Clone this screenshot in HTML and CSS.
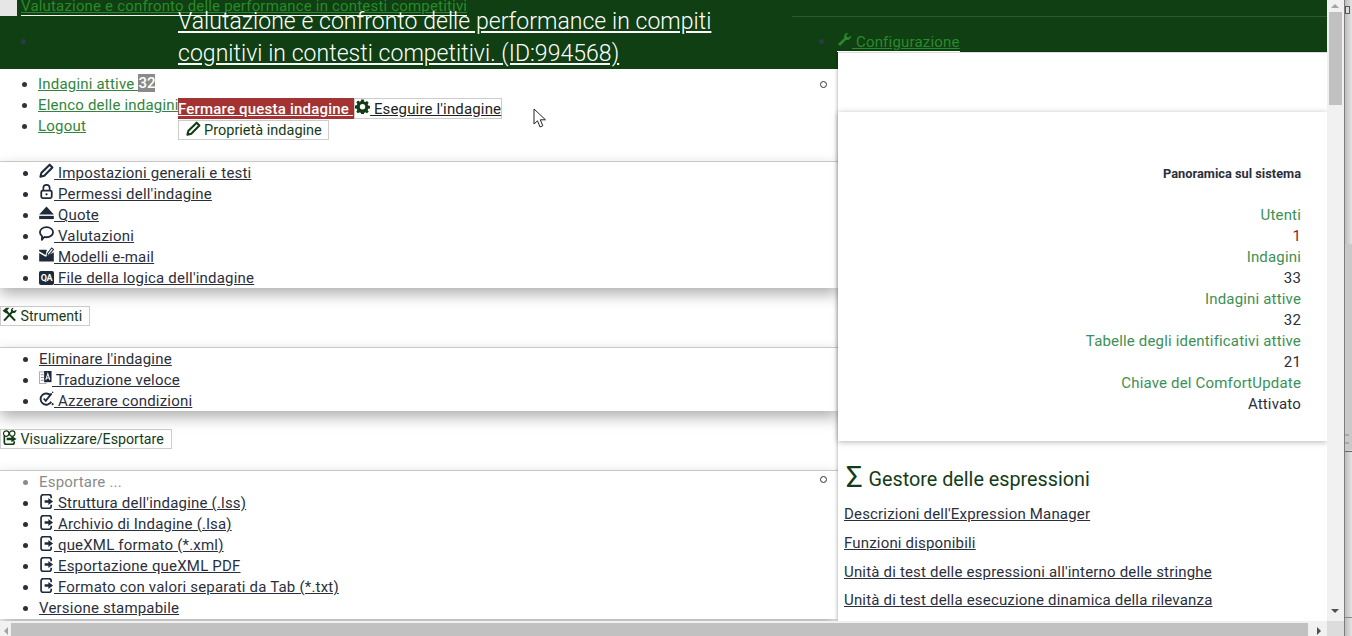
FILE: index.html
```html
<!DOCTYPE html>
<html lang="it">
<head>
<meta charset="utf-8">
<title>Valutazione e confronto</title>
<link rel="stylesheet" href="styles.css">
</head>
<body>
<svg class="sprites" width="0" height="0" aria-hidden="true">
  <defs>
    <symbol id="i-pencil" viewBox="0 0 16 16"><path d="M11.4 1.800 14.300 4.700 5.600 13.500 1.500 14.600 2.600 10.400Z" fill="none" stroke="currentColor" stroke-width="2.200" stroke-linejoin="round"/></symbol>
    <symbol id="i-lock" viewBox="0 0 16 16"><path d="M4.600 7V4.400a3.400 3.400 0 0 1 6.800 0V7" fill="none" stroke="currentColor" stroke-width="1.800"/><rect x="2.400" y="7" width="11.200" height="8" rx="1.600" fill="none" stroke="currentColor" stroke-width="1.900"/><circle cx="8" cy="11" r="1.200" fill="currentColor"/></symbol>
    <symbol id="i-eject" viewBox="0 0 16 16"><path d="M8 1.500 15.800 10H.2Z" fill="currentColor"/><rect x=".2" y="11.600" width="15.600" height="3.400" fill="currentColor"/></symbol>
    <symbol id="i-bubble" viewBox="0 0 16 16"><path d="M8 1.200c3.900 0 7 2.400 7 5.400s-3.100 5.400-7 5.400c-.8 0-1.600-.1-2.400-.3L3 14.800l.3-4C1.900 9.800 1 8.300 1 6.600 1 3.600 4.100 1.200 8 1.200Z" fill="none" stroke="currentColor" stroke-width="1.900" stroke-linejoin="round"/></symbol>
    <symbol id="i-mail" viewBox="0 0 16 16"><path d="M.2 6.500 7 10.500l3.500-2 5.300-3V15.500H.2Z" fill="currentColor"/><path d="M.2 3H8.300L7.500 7 6.800 8.400.2 4.600Z" fill="currentColor"/><path d="M9 7 13.500 1 15.500 2.700 10.800 8.200 8.800 8.800Z" fill="none" stroke="currentColor" stroke-width="1.100"/></symbol>
    <symbol id="i-export" viewBox="0 0 16 16"><path d="M13 4.500V3A2.300 2.300 0 0 0 10.700.7H4.500A2.300 2.300 0 0 0 2.200 3v10a2.300 2.300 0 0 0 2.300 2.300h6.200A2.300 2.300 0 0 0 13 13v-1.500" fill="none" stroke="currentColor" stroke-width="1.800"/><path d="M6 6.600h4V4.200L15 8l-5 3.800V9.400H6Z" fill="currentColor"/></symbol>
    <symbol id="i-translate" viewBox="0 0 14 16"><rect x=".5" y="2" width="7" height="12.500" fill="none" stroke="#aaa" stroke-width="1"/><path d="M2 5h3M2 8h3M2 11h3" stroke="#888" stroke-width="1"/><rect x="5.500" y="1" width="8" height="12" fill="currentColor"/><path d="M7.300 10.500 9.500 3.800 11.700 10.500M8 8.600h3" fill="none" stroke="#fff" stroke-width="1.100"/></symbol>
    <symbol id="i-reset" viewBox="0 0 16 16"><path d="M12.500 5A6 6 0 1 0 13 11.500" fill="none" stroke="currentColor" stroke-width="2"/><path d="M5 8 7.200 10.500 13.500 2.500" fill="none" stroke="currentColor" stroke-width="1.900"/><circle cx="14.500" cy="14" r="1.100" fill="currentColor"/><circle cx="14.500" cy="1.200" r=".8" fill="currentColor"/></symbol>
    <symbol id="i-gear" viewBox="0 0 16 16"><path fill-rule="evenodd" d="M6.700.6h2.600l.4 2 1.300.6 1.800-1.100 1.800 1.800-1.100 1.800.6 1.300 2 .4v2.600l-2 .4-.6 1.300 1.100 1.800-1.800 1.800-1.800-1.100-1.300.6-.4 2H6.700l-.4-2-1.300-.6-1.800 1.100-1.800-1.800 1.100-1.800-.6-1.300-2-.4V7l2-.4.6-1.300-1.100-1.800 1.800-1.800L5 2.800l1.300-.6ZM8 5.400a2.900 2.900 0 1 0 0 5.800 2.900 2.900 0 0 0 0-5.800Z" fill="currentColor"/></symbol>
    <symbol id="i-tools" viewBox="0 0 16 16"><path d="M2.200 14.500 11 5M14 14.500 5 5" fill="none" stroke="currentColor" stroke-width="2.200"/><path d="M.5 4 4.500.8H8L5.500 3.500 6.500 5 4.500 7Z" fill="currentColor"/><path d="M15.500 3a3 3 0 0 1-4.500 3L9.500 4.500a3 3 0 0 1 3-3.800L11 3l1.500 1.200Z" fill="currentColor"/></symbol>
    <symbol id="i-view" viewBox="0 0 16 16"><circle cx="4.500" cy="3.800" r="2.900" fill="none" stroke="currentColor" stroke-width="1.300"/><circle cx="10.900" cy="3.800" r="2.900" fill="none" stroke="currentColor" stroke-width="1.300"/><path d="M13 12v1.300a2 2 0 0 1-2 2H4.500a2 2 0 0 1-2-2V6.500" fill="none" stroke="currentColor" stroke-width="1.800"/><path d="M5 8.200h5V6l5.500 3.500L10 13v-2.200H5Z" fill="currentColor"/></symbol>
    <symbol id="i-wrench" viewBox="0 0 16 16"><path d="M15 3.800a4 4 0 0 1-5.300 4.400L3.300 15 1 12.700l6.800-6.400A4 4 0 0 1 12.200 1L9.800 3.400l.6 1.900 1.900.6Z" fill="currentColor"/></symbol>
  </defs>
</svg>

<div class="window">
  <div class="pane">
    <div class="stage">
      <header class="header">
        <a class="brand-mark" href="#" aria-label="Home"></a>
        <a class="brand" href="#">Valutazione e confronto delle performance in contesti competitivi</a>
        <div class="hdr-left">
          <span class="hdr-dot"></span>
          <a class="title" href="#">Valutazione e confronto delle performance in compiti cognitivi in contesti competitivi. (ID:994568)</a>
        </div>
        <div class="hdr-right">
          <span class="hdr-dot hdr-dot-r"></span>
          <a class="config" href="#"><svg class="ic"><use href="#i-wrench"/></svg> Configurazione</a>
        </div>
      </header>

      <div class="body">
        <main class="left">
          <section class="top">
            <ul class="list nav">
              <li><a href="#">Indagini attive <b class="badge">32</b></a></li>
              <li><a href="#">Elenco delle indagini</a></li>
              <li><a href="#">Logout</a></li>
            </ul>
            <div class="actions">
              <div class="act-row">
                <a class="btn-stop" href="#">Fermare questa indagine </a>
                <a class="btn-run" href="#"><svg class="ic"><use href="#i-gear"/></svg> Eseguire l'indagine</a>
              </div>
              <a class="btn" href="#"><svg class="ic"><use href="#i-pencil"/></svg> Proprietà indagine</a>
            </div>
            <span class="ring"></span>
          </section>

          <section class="panel panel-1">
            <ul class="list menu">
              <li><a href="#"><svg class="ic"><use href="#i-pencil"/></svg> Impostazioni generali e testi</a></li>
              <li><a href="#"><svg class="ic"><use href="#i-lock"/></svg> Permessi dell'indagine</a></li>
              <li><a href="#"><svg class="ic"><use href="#i-eject"/></svg> Quote</a></li>
              <li><a href="#"><svg class="ic"><use href="#i-bubble"/></svg> Valutazioni</a></li>
              <li><a href="#"><svg class="ic"><use href="#i-mail"/></svg> Modelli e-mail</a></li>
              <li><a href="#"><span class="qa">QA</span> File della logica dell'indagine</a></li>
            </ul>
          </section>

          <div class="tool-row"><a class="btn" href="#"><svg class="ic"><use href="#i-tools"/></svg> Strumenti</a></div>
          <section class="panel panel-2">
            <ul class="list menu">
              <li><a href="#">Eliminare l'indagine</a></li>
              <li><a href="#"><svg class="ic ic-t"><use href="#i-translate"/></svg> Traduzione veloce</a></li>
              <li><a href="#"><svg class="ic"><use href="#i-reset"/></svg> Azzerare condizioni</a></li>
            </ul>
          </section>

          <div class="tool-row"><a class="btn" href="#"><svg class="ic"><use href="#i-view"/></svg> Visualizzare/Esportare</a></div>
          <section class="panel panel-3">
            <span class="ring ring-low"></span>
            <ul class="list menu">
              <li class="muted">Esportare ...</li>
              <li><a href="#"><svg class="ic ic-x"><use href="#i-export"/></svg> Struttura dell'indagine (.lss)</a></li>
              <li><a href="#"><svg class="ic ic-x"><use href="#i-export"/></svg> Archivio di Indagine (.lsa)</a></li>
              <li><a href="#"><svg class="ic ic-x"><use href="#i-export"/></svg> queXML formato (*.xml)</a></li>
              <li><a href="#"><svg class="ic ic-x"><use href="#i-export"/></svg> Esportazione queXML PDF</a></li>
              <li><a href="#"><svg class="ic ic-x"><use href="#i-export"/></svg> Formato con valori separati da Tab (*.txt)</a></li>
              <li><a href="#">Versione stampabile</a></li>
            </ul>
          </section>
        </main>

        <aside class="right">
          <div class="spacer"></div>
          <section class="card">
            <h2 class="card-title">Panoramica sul sistema</h2>
            <dl class="stats">
              <dt>Utenti</dt><dd class="hot">1</dd>
              <dt>Indagini</dt><dd>33</dd>
              <dt>Indagini attive</dt><dd>32</dd>
              <dt>Tabelle degli identificativi attive</dt><dd>21</dd>
              <dt>Chiave del ComfortUpdate</dt><dd>Attivato</dd>
            </dl>
          </section>
          <section class="expr">
            <h3 class="expr-title"><span class="sigma">Σ</span> Gestore delle espressioni</h3>
            <a href="#">Descrizioni dell'Expression Manager</a>
            <a href="#">Funzioni disponibili</a>
            <a href="#">Unità di test delle espressioni all'interno delle stringhe</a>
            <a href="#">Unità di test della esecuzione dinamica della rilevanza</a>
          </section>
        </aside>
      </div>
    </div>

    <div class="hbar">
      <span class="arrow arrow-left"></span>
      <span class="hthumb"></span>
      <span class="arrow arrow-right"></span>
    </div>
  </div>

  <div class="vbar">
    <span class="arrow arrow-up"></span>
    <span class="vthumb"></span>
    <span class="arrow arrow-down"></span>
    <span class="corner"></span>
  </div>

  <div class="outer-strip">
    <span class="strip-box"></span>
    <span class="strip-light"></span>
    <span class="strip-mark"></span>
    <span class="strip-lower"></span>
    <span class="strip-line"></span>
  </div>
</div>

<svg class="cursor" width="14" height="21" viewBox="0 0 14 21" aria-hidden="true"><path d="M1 1V16L4.500 12.800 7 19 9.800 17.800 7.300 11.800H12.500Z" fill="#fff" stroke="#222" stroke-width="1"/></svg>
</body>
</html>
```
FILE: styles.css
```css
* { box-sizing: border-box; }
html, body { margin: 0; height: 100%; overflow: hidden; }
body { font: 15px/21px Roboto, "Liberation Sans", sans-serif; letter-spacing: .2px; color: #333; background: #fff; }
a { color: inherit; }
ul { margin: 0; }
.sprites { position: absolute; }

.window { display: flex; width: 1352px; height: 636px; }
.pane { width: 1327px; display: flex; flex-direction: column; }
.stage { height: 621px; overflow: hidden; }

/* header */
.header { position: relative; height: 69px; background: #0f3f13; display: flex; color: #2a8a2a; }
.header::after { content: ""; position: absolute; left: 792px; right: 0; top: 16px; height: 1px; background: #2b5a2f; }
.brand-mark { position: absolute; left: 0; top: 0; width: 17px; height: 16px; background: #e6e6e6; }
.brand { position: absolute; left: 21px; top: -3px; z-index: 1; font-size: 15px; line-height: 18px; letter-spacing: .18px; border-bottom: 1px solid #fff; white-space: nowrap; }
.hdr-left { width: 837px; display: flex; align-items: flex-start; padding-top: 6px; }
.hdr-dot { width: 5px; height: 5px; margin: 33px 0 0 21px; border-radius: 50%; background: #2e3a45; flex: none; }
.title { width: 560px; margin-left: 152px; font-size: 23px; line-height: 32px; font-weight: 300; letter-spacing: .04px; color: #fff; position: relative; z-index: 2; }
.hdr-right { position: relative; flex: 1; }
.hdr-dot-r { position: absolute; left: -18px; top: 6px; margin: 33px 0 0; }
.config { position: absolute; left: 0; top: 32px; height: 20px; display: inline-block; border-bottom: 1px solid #fff; z-index: 3; white-space: nowrap; letter-spacing: .2px; }
.config .ic { color: #2a8a2a; }

.ic { display: inline-block; width: 15px; height: 15px; vertical-align: 0; color: #1e2a3a; }
.ic-t { width: 13px; }
.ic-x { vertical-align: -1px; }
.qa { display: inline-block; width: 15px; height: 14px; border-radius: 2px; background: #1e2a3a; color: #fff; font-size: 9px; line-height: 14px; font-weight: 700; text-align: center; vertical-align: 2px; letter-spacing: -.5px; }

/* layout */
.body { display: flex; height: 552px; }
.left { width: 838px; flex: none; }
.right { width: 489px; flex: none; margin-top: -17px; height: 569px; background: #fff; position: relative; z-index: 2; border-top: 1px solid #ddd; box-shadow: -1px 0 3px rgba(0,0,0,.25); }

/* left top */
.top { height: 93px; display: flex; align-items: flex-start; border-bottom: 1px solid #d4d4d4; }
.list { padding: 0; list-style: disc; }
.list li { height: 21px; }
.nav { width: 178px; flex: none; padding: 5px 0 0 38px; color: #333; }
.nav a { white-space: nowrap; color: #32853c; }
.badge { display: inline-block; height: 18px; padding: 0; line-height: 18px; background: #8a8a8a; color: #fff; font-weight: 500; letter-spacing: 0; vertical-align: top; }
.actions { padding-top: 29px; display: flex; flex-direction: column; align-items: flex-start; width: 400px; }
.act-row { display: flex; height: 22px; }
.btn-stop { height: 21px; width: 176px; background: #a33333; color: #fff; font-weight: 500; line-height: 23px; white-space: pre; }
.btn-run { height: 21px; padding: 0; border: 1px solid #ccc; line-height: 19px; letter-spacing: .16px; color: #222; white-space: nowrap; }
.btn-run .ic { color: #123c14; }
.btn { display: inline-block; height: 20px; padding: 0 7px 0 1px; border: 1px solid #ccc; line-height: 18px; color: #143c18; text-decoration: none; white-space: nowrap; font-size: 14.200px; letter-spacing: 0; }
.btn .ic { color: #123c14; vertical-align: -1px; }
.actions .btn { padding: 0 6.500px; font-size: 14.500px; }
.ring { width: 7px; height: 7px; border: 1px solid #333; border-radius: 50%; flex: none; margin: 12px 0 0 242px; }

/* panels */
.panel { position: relative; background: #fff; box-shadow: 0 6px 14px rgba(0,0,0,.32); }
.panel-1 { height: 126px; }
.panel-2 { height: 63px; }
.panel-3 { height: 148px; }
.menu { padding: 1px 0 0 39px; color: #2b2f3c; }
.menu .muted { color: #8a8a8a; }
.tool-row { height: 60px; padding-top: 18px; border-bottom: 1px solid #d4d4d4; }
.ring-low { position: absolute; left: 820px; top: 5px; margin: 0; }

/* right */
.spacer { height: 59px; }
.card { height: 329px; padding: 52px 26px 0 0; text-align: right; background: #fff; box-shadow: 0 1px 6px rgba(0,0,0,.3); position: relative; letter-spacing: .17px; }
.card-title { margin: 0 0 22px; font-size: 12.800px; line-height: 19px; font-weight: 700; letter-spacing: 0; color: #2b2f3c; }
.stats { margin: 0; }
.stats dt { color: #3d9055; }
.stats dd { margin: 0; color: #2b2f3c; }
.stats .hot { color: #8a1f1f; }
.expr { padding: 20px 0 0 6px; letter-spacing: .18px; }
.expr-title { margin: 0 0 11.200px 2px; height: 32px; font-size: 19.800px; line-height: 32px; font-weight: 400; letter-spacing: 0; color: #143c18; white-space: nowrap; }
.sigma { font-size: 29px; vertical-align: -1px; margin-right: 1px; }
.expr a { display: block; height: 28.700px; color: #2b2f3c; }

/* fake scrollbars */
.hbar { position: relative; height: 15px; background: #f1f1f1; }
.hthumb { position: absolute; left: 11px; top: 2px; width: 1297px; height: 13px; background: #c1c1c1; }
.vbar { position: relative; width: 17px; height: 636px; background: #f1f1f1; }
.vthumb { position: absolute; left: 2px; top: 12px; width: 13px; height: 93px; background: #c1c1c1; }
.corner { position: absolute; left: 0; bottom: 0; width: 17px; height: 15px; background: #dcdcdc; }
.arrow { position: absolute; width: 0; height: 0; border: 4px solid transparent; }
.arrow-up { left: 4px; top: 0; border-bottom-color: #a3a3a3; }
.arrow-down { left: 4px; top: 609px; border-top-color: #505050; }
.arrow-left { left: 0; top: 6px; border-right-color: #a3a3a3; }
.arrow-right { left: 1317px; top: 6px; border-left-color: #505050; }

.outer-strip { position: relative; width: 8px; height: 636px; border-left: 1px solid #7d7d7d; background: linear-gradient(90deg, #bdbdbd, #e4e4e4); }
.strip-box { position: absolute; left: 0; top: 6px; width: 5px; height: 8px; border: 1px solid #555; background: #ddd; }
.strip-light { position: absolute; left: 0; right: 0; top: 244px; height: 206px; background: #c9c9c9; }
.strip-mark { position: absolute; left: 0; top: 434px; width: 4px; height: 10px; border-top: 2px solid #aaa; border-bottom: 2px solid #aaa; }
.strip-lower { position: absolute; left: 0; width: 7px; top: 451px; height: 1px; background: #666; }
.strip-line { position: absolute; left: 0; width: 7px; top: 617px; height: 1px; background: #888; }

.cursor { position: absolute; left: 533px; top: 108px; z-index: 10; }
```
